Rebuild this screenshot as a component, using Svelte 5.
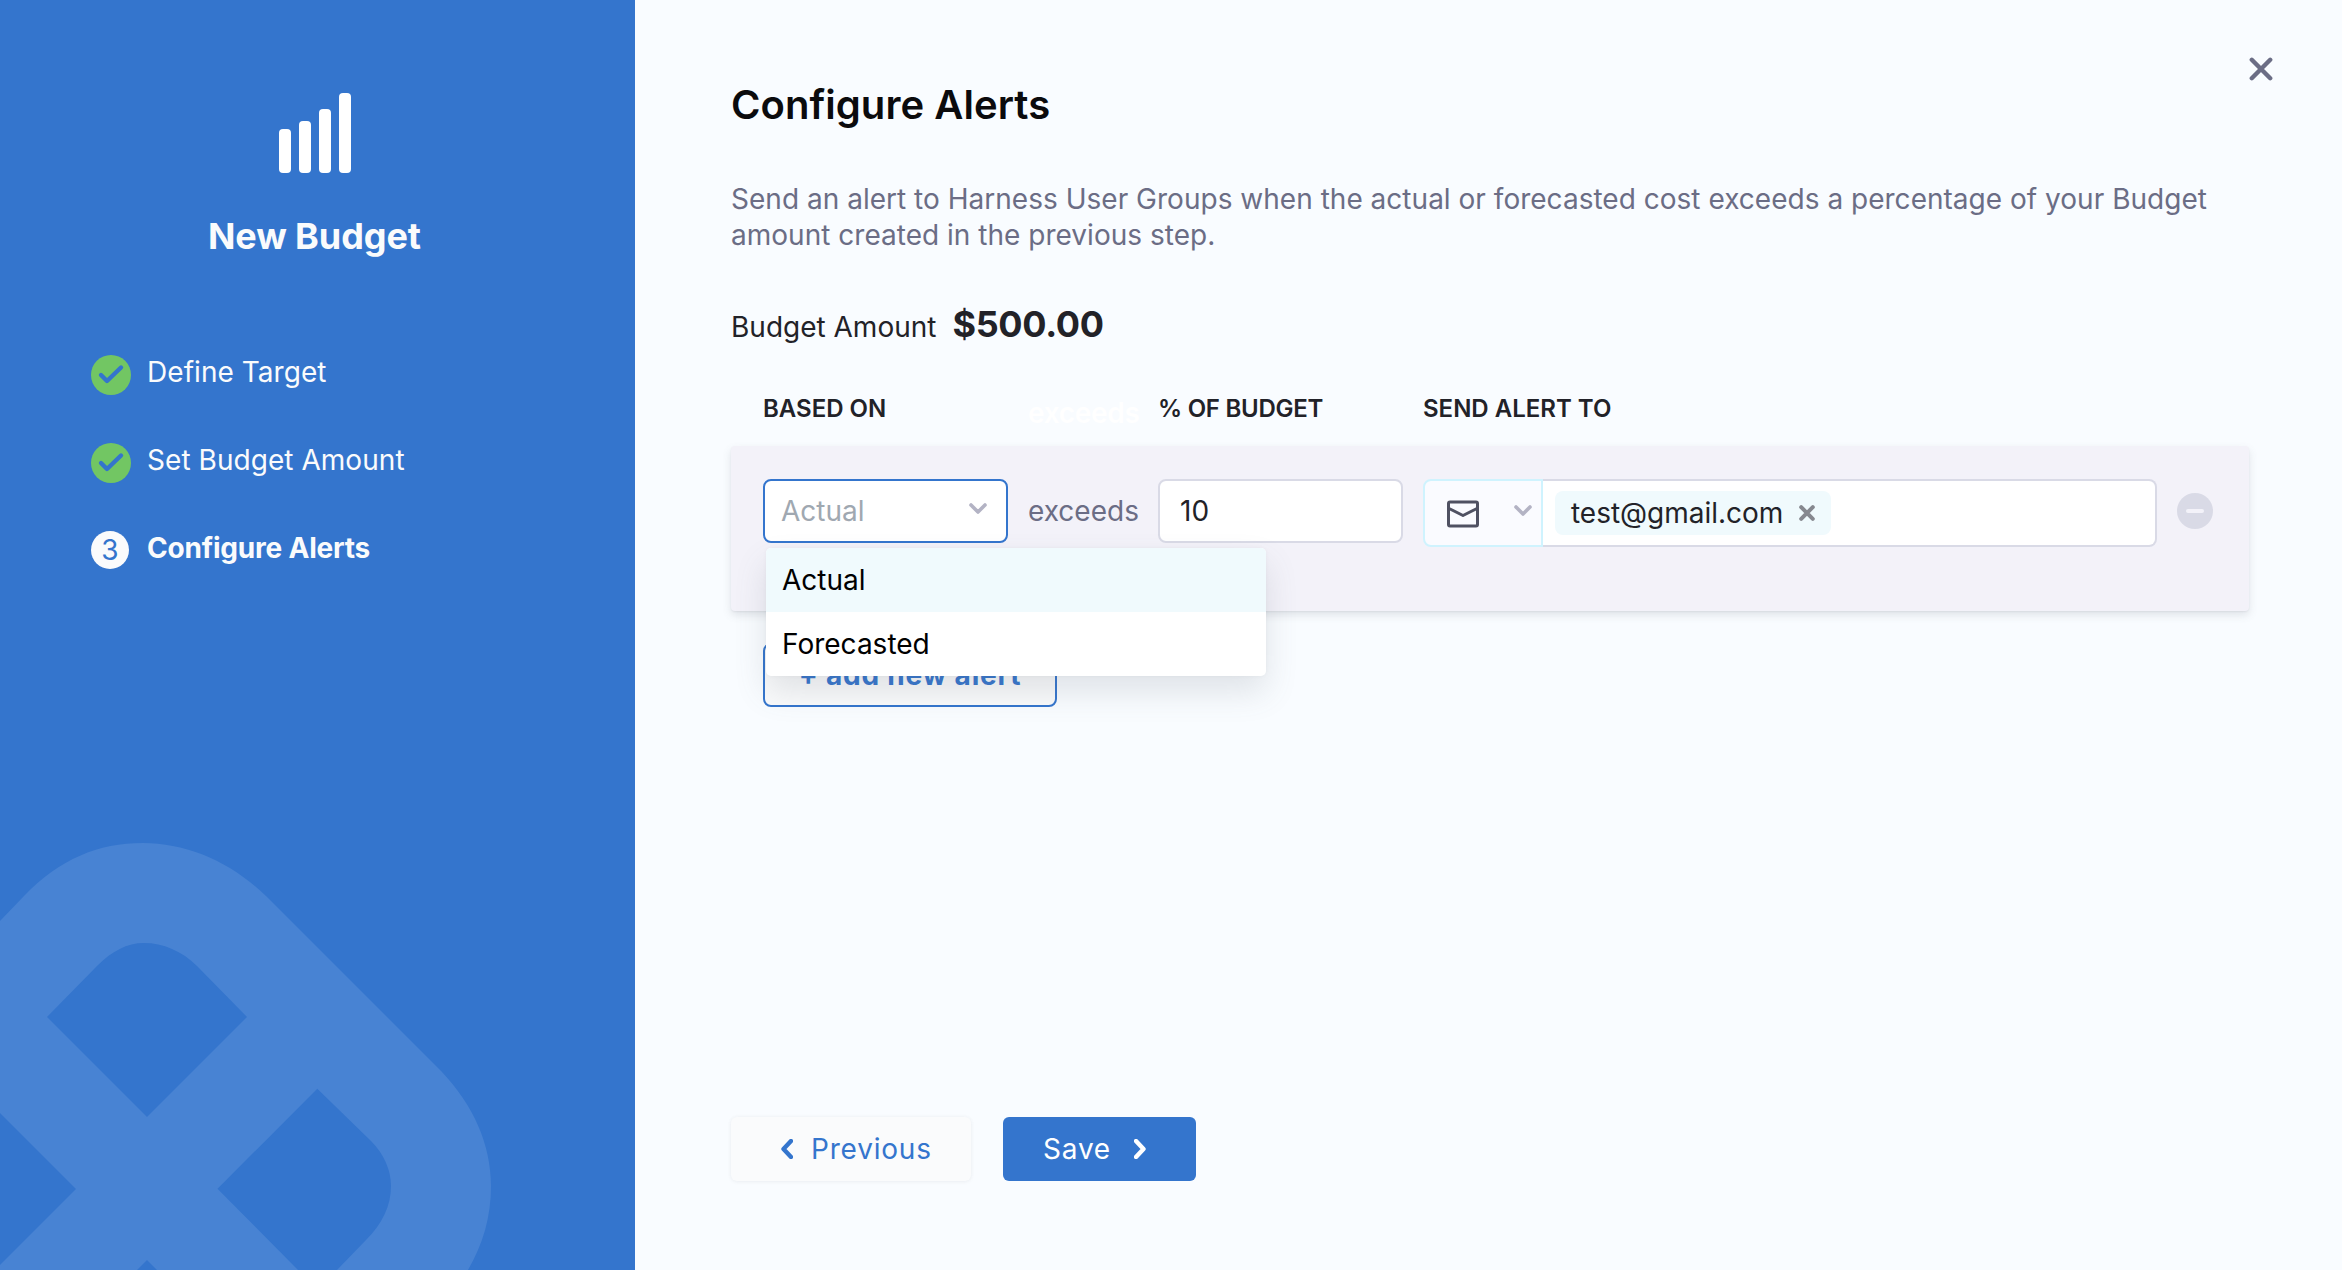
<script lang="ts">
  const steps = [
    { label: 'Define Target', done: true },
    { label: 'Set Budget Amount', done: true },
    { label: 'Configure Alerts', done: false }
  ];
  const options = ['Actual', 'Forecasted'];
  const bars = [
    { x: 0, h: 44 },
    { x: 20, h: 52 },
    { x: 40, h: 64 },
    { x: 60, h: 80 }
  ];
</script>

<div class="page">
  <aside class="sidebar">
    <svg class="mark" viewBox="0 0 635 450" width="635" height="450">
      <path
        fill-rule="evenodd"
        d="M0 101 L24 76 C60 39 98 23 143 23 C187 23 231 42 266 76 L442 252 C474 286 491 325 491 366 C491 397 483 424 468 450 L337 450 L366 420 C382 404 391 386 391 366 C391 350 384 334 371 321 L317.3 268.7 L217.5 368.7 L298 450 L157 450 L147 440 L137 450 L0 450 L0 445 L76 369 L0 293 Z M47 197 L97 146 C112 131 127 123 144 123 C163 123 182 131 197 146 L247 197 L147 297 Z"
      />
    </svg>
    <svg class="bars" viewBox="0 0 72 80" width="72" height="80">
      {#each bars as b}
        <rect x={b.x} y={80 - b.h} width="12" height={b.h} rx="4" />
      {/each}
    </svg>
    <h2>New Budget</h2>
    <ol>
      {#each steps as step, i}
        <li class:current={!step.done}>
          {#if step.done}
            <svg class="check" viewBox="0 0 40 40" width="40" height="40">
              <circle cx="20" cy="20" r="20" />
              <path d="M10 20 L16 26 L30 12.5" />
            </svg>
          {:else}
            <span class="num">{i + 1}</span>
          {/if}
          <span class="label">{step.label}</span>
        </li>
      {/each}
    </ol>
  </aside>

  <main>
    <button class="close" aria-label="Close">
      <svg viewBox="0 0 24 24" width="24" height="24"><path d="M2.8 2.8 L21.2 21.2 M21.2 2.8 L2.8 21.2" /></svg>
    </button>
    <h1>Configure Alerts</h1>
    <p class="desc">
      Send an alert to Harness User Groups when the actual or forecasted cost exceeds a percentage of your Budget
      amount created in the previous step.
    </p>
    <div class="amount"><span>Budget Amount</span><strong>$500.00</strong></div>

    <div class="grid head">
      <span>BASED ON</span>
      <span class="ghost">exceeds</span>
      <span class="pct">% OF BUDGET</span>
      <span>SEND ALERT TO</span>
    </div>

    <section class="grid card">
      <div class="select">
        <span>Actual</span>
        <svg viewBox="0 0 18 12" width="18" height="12"><path d="M2 2 L9 9 L16 2" /></svg>
        <ul class="menu">
          {#each options as o, i}
            <li class:active={i === 0}>{o}</li>
          {/each}
        </ul>
      </div>
      <span class="exceeds">exceeds</span>
      <div class="percent">10</div>
      <div class="recipients">
        <div class="channel">
          <svg class="mail" viewBox="0 0 32 28" width="32" height="28">
            <rect x="1.5" y="2" width="29" height="24" rx="1.5" />
            <path d="M2 8.5 L16 15.5 L30 8.5" />
          </svg>
          <svg class="chev" viewBox="0 0 18 12" width="18" height="12"><path d="M2 2 L9 9 L16 2" /></svg>
        </div>
        <div class="emails">
          <span class="tag">
            <span>test@gmail.com</span>
            <svg viewBox="0 0 16 16" width="16" height="16"><path d="M2.2 2.2 L13.8 13.8 M13.8 2.2 L2.2 13.8" /></svg>
          </span>
        </div>
      </div>
      <svg class="minus" viewBox="0 0 36 36" width="36" height="36">
        <circle cx="18" cy="18" r="18" />
        <rect x="9" y="16" width="18" height="4" rx="2" />
      </svg>
    </section>

    <button class="add">+ add new alert</button>

    <footer>
      <button class="prev">
        <svg viewBox="0 0 12 20" width="12" height="20"><path d="M10 2 L2.5 10 L10 18" /></svg>
        <span>Previous</span>
      </button>
      <button class="save">
        <span>Save</span>
        <svg viewBox="0 0 12 20" width="12" height="20"><path d="M2 2 L9.5 10 L2 18" /></svg>
      </button>
    </footer>
  </main>
</div>

<style>
  :global(body) {
    margin: 0;
  }
  .page {
    display: flex;
    width: 2342px;
    height: 1270px;
    overflow: hidden;
    background: #f9fcff;
    font-family: Inter, 'Liberation Sans', sans-serif;
    font-size: 28px;
    color: #222228;
  }
  .page * {
    box-sizing: border-box;
  }
  button {
    font: inherit;
    border: 0;
    padding: 0;
    background: none;
  }
  h1,
  h2,
  p,
  ol,
  ul {
    margin: 0;
    padding: 0;
    list-style: none;
  }
  svg {
    display: block;
    flex: none;
  }
  .sidebar {
    position: relative;
    display: flex;
    flex-direction: column;
    width: 635px;
    height: 100%;
    padding-top: 93px;
    background: #3475cd;
    color: #fafbfc;
  }
  .mark {
    position: absolute;
    left: 0;
    bottom: 0;
    fill: #4883d3;
  }
  .bars {
    margin-left: 279px;
    fill: #fff;
  }
  h2 {
    margin-top: 41px;
    padding-left: 208px;
    font-size: 36px;
    line-height: 44px;
    font-weight: 700;
    letter-spacing: -0.1px;
    white-space: nowrap;
  }
  ol {
    padding: 96px 0 0 91px;
  }
  li {
    white-space: nowrap;
  }
  ol li {
    display: flex;
    height: 88px;
    align-items: flex-start;
  }
  .check {
    margin-top: 1px;
  }
  .check circle {
    fill: #72c663;
  }
  .check path {
    fill: none;
    stroke: #3475cd;
    stroke-width: 4.4;
    stroke-linecap: round;
    stroke-linejoin: round;
  }
  .num {
    width: 38px;
    height: 38px;
    margin: 1px 2px 0 0;
    border-radius: 50%;
    background: #fafbfc;
    color: #3475cd;
    font-size: 28px;
    line-height: 39px;
    text-align: center;
  }
  .label {
    margin-left: 16px;
    line-height: 37px;
    letter-spacing: 0.05px;
  }
  .current .label {
    font-weight: 700;
    letter-spacing: -0.2px;
  }
  main {
    position: relative;
    display: flex;
    flex-direction: column;
    flex: 1;
    padding: 0 93px 0 96px;
  }
  .close {
    position: absolute;
    right: 69px;
    top: 57px;
  }
  .close path {
    fill: none;
    stroke: #6b6d85;
    stroke-width: 4.4;
    stroke-linecap: round;
  }
  h1 {
    margin-top: 81px;
    font-size: 40px;
    line-height: 48px;
    font-weight: 600;
    letter-spacing: 0.05px;
    color: #0b0b0d;
    white-space: nowrap;
  }
  .desc {
    width: 1510px;
    margin-top: 52px;
    line-height: 36px;
    letter-spacing: 0.018px;
    color: #6b6d85;
  }
  .amount {
    display: flex;
    align-items: baseline;
    gap: 16px;
    height: 44px;
    margin-top: 49px;
    line-height: 44px;
  }
  .amount strong {
    font-size: 36px;
    font-weight: 700;
    letter-spacing: -0.35px;
  }
  .grid {
    display: grid;
    grid-template-columns: 245px 110px 245px 734px 36px;
    column-gap: 20px;
    padding-left: 32px;
  }
  .head {
    height: 32px;
    margin-top: 47px;
    line-height: 32px;
    font-size: 24px;
    font-weight: 600;
    white-space: nowrap;
  }
  .pct {
    letter-spacing: -0.25px;
  }
  .ghost {
    font-size: 28px;
    line-height: 40px;
    color: #fff;
    letter-spacing: -0.3px;
  }
  .card {
    height: 165px;
    margin-top: 21px;
    padding-top: 33px;
    align-items: start;
    background: #f3f2f9;
    border-radius: 4px;
    box-shadow: 0 1px 2px rgba(40, 41, 61, 0.06), 0 4px 8px rgba(96, 97, 112, 0.16);
  }
  .select {
    position: relative;
    display: flex;
    align-items: center;
    justify-content: space-between;
    height: 64px;
    padding: 0 19px 0 16px;
    border: 2px solid #3475cd;
    border-radius: 8px;
    background: #fff;
    color: #a0a8b1;
  }
  .select > svg {
    margin-top: -4px;
  }
  .select > svg path,
  .chev path {
    fill: none;
    stroke: #b3b3c4;
    stroke-width: 3.6;
    stroke-linecap: round;
    stroke-linejoin: round;
  }
  .menu {
    position: absolute;
    z-index: 2;
    left: 1px;
    top: 67px;
    width: 500px;
    border-radius: 5px;
    overflow: hidden;
    background: #fff;
    color: #000;
    box-shadow: 0 0 4px rgba(40, 41, 61, 0.04), 0 16px 32px rgba(96, 97, 112, 0.16);
  }
  .menu li {
    height: 64px;
    padding-left: 16px;
    line-height: 64px;
  }
  .menu .active {
    background: #f0fafd;
  }
  .exceeds {
    line-height: 64px;
    color: #6b6d85;
  }
  .percent {
    height: 64px;
    padding-left: 20px;
    border: 2px solid #d9dae6;
    border-radius: 8px;
    background: #fff;
    line-height: 60px;
  }
  .recipients {
    display: flex;
    height: 68px;
  }
  .channel {
    display: flex;
    align-items: center;
    width: 120px;
    padding-left: 22px;
    border: 2px solid #cff3fe;
    border-radius: 8px 0 0 8px;
    background: #fafbff;
  }
  .mail {
    margin-top: 2px;
    fill: none;
    stroke: #4f5162;
    stroke-width: 3;
    stroke-linejoin: round;
  }
  .chev {
    margin: -4px 0 0 35px;
  }
  .emails {
    display: flex;
    align-items: center;
    flex: 1;
    padding-left: 12px;
    border: 2px solid #d9dae6;
    border-left: 0;
    border-radius: 0 8px 8px 0;
    background: #fff;
  }
  .tag {
    display: flex;
    align-items: center;
    gap: 16px;
    height: 44px;
    padding: 0 16px;
    border-radius: 8px;
    background: #f0fafd;
    line-height: 44px;
    letter-spacing: -0.03px;
  }
  .tag path {
    stroke: #86888f;
    stroke-width: 4;
    stroke-linecap: round;
  }
  .minus {
    margin-top: 14px;
  }
  .minus circle {
    fill: #d9dae6;
  }
  .minus rect {
    fill: #f3f2f9;
  }
  .add {
    width: 294px;
    height: 64px;
    margin: 32px 0 0 32px;
    border: 2px solid #3475cd;
    border-radius: 8px;
    background: #fafbfc;
    color: #3475cd;
    font-weight: 700;
    letter-spacing: 0.8px;
    line-height: 60px;
    white-space: nowrap;
  }
  footer {
    display: flex;
    gap: 32px;
    margin-top: 410px;
  }
  footer button {
    display: flex;
    align-items: center;
    height: 64px;
    border-radius: 6px;
    letter-spacing: 0.8px;
  }
  footer path {
    fill: none;
    stroke: currentColor;
    stroke-width: 4.4;
    stroke-linecap: round;
    stroke-linejoin: round;
  }
  .prev {
    width: 240px;
    padding-left: 50px;
    gap: 18px;
    background: #fafbfc;
    color: #3475cd;
    box-shadow: 0 0 4px rgba(40, 41, 61, 0.04), 0 1px 4px rgba(96, 97, 112, 0.05);
  }
  .save {
    width: 193px;
    padding-left: 40px;
    gap: 23px;
    background: #3475cd;
    color: #fff;
  }
</style>
